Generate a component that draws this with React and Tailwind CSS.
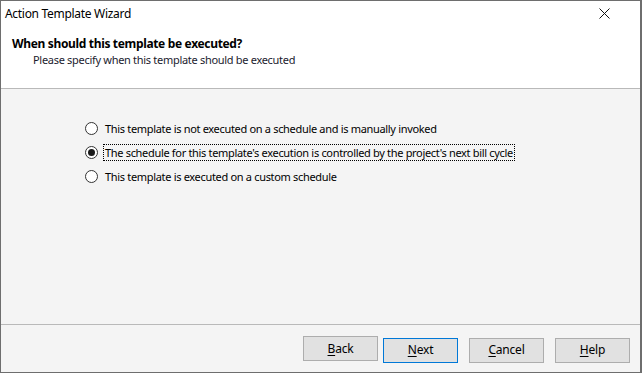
const options = [
  "This template is not executed on a schedule and is manually invoked",
  "The schedule for this template's execution is controlled by the project's next bill cycle",
  "This template is executed on a custom schedule",
];

const Radio = ({ checked }) => (
  <span className="w-[13px] h-[13px] rounded-full border border-[#333333] bg-white flex items-center justify-center shrink-0">
    {checked && <span className="w-[7px] h-[7px] rounded-full bg-[#1a1a1a]" />}
  </span>
);

const Button = ({ label, accel, rest, focused }) => (
  <button
    className={`w-[75px] h-[25px] border bg-[#e1e1e1] text-[12px] text-black tracking-[-0.2px] ${
      focused ? "border-[#0078d7]" : "border-[#adadad]"
    }`}
    aria-label={label}
  >
    <span className="underline underline-offset-2">{accel}</span>
    {rest}
  </button>
);

export default function App() {
  const selected = 1;

  return (
    <div
      className="w-[642px] h-[373px] bg-[#6e6e6e] p-px"
      style={{ fontFamily: '"Noto Sans", "Liberation Sans", sans-serif' }}
    >
      <div className="w-[639px] h-full flex flex-col bg-[#f4f4f4]">
        {/* title bar */}
        <div className="h-[29px] bg-white flex items-center justify-between pl-[4px] pr-[30px] pb-[4px]">
          <span className="text-[12px] text-black tracking-[-0.3px]">Action Template Wizard</span>
          <svg width="11" height="11" viewBox="0 0 11 11">
            <path d="M0.5 0.5 L10.5 10.5 M10.5 0.5 L0.5 10.5" stroke="#111" strokeWidth="1" />
          </svg>
        </div>

        {/* header */}
        <div className="h-[59px] bg-white border-b border-[#b9b9b9] pl-[11px] pt-[6px]">
          <div className="text-[12px] font-bold text-black leading-[16px] tracking-[-0.34px]">
            When should this template be executed?
          </div>
          <div className="text-[11px] text-[#1b1b2e] leading-[16px] pl-[21px] tracking-[-0.3px]">
            Please specify when this template should be executed
          </div>
        </div>

        {/* options */}
        <div className="flex-1 flex flex-col gap-[8px] pl-[84px] pt-[31px]">
          {options.map((opt, i) => (
            <label key={i} className="flex items-center gap-[6px] h-[16px]">
              <Radio checked={i === selected} />
              <span
                className={`text-[11px] text-black leading-[15px] px-[1px] tracking-[-0.32px] ${
                  i === selected ? "outline outline-1 outline-dotted outline-black" : ""
                }`}
              >
                {opt}
              </span>
            </label>
          ))}
        </div>

        {/* footer */}
        <div className="h-[48px] border-t border-[#b9b9b9] flex items-start justify-end pt-[11px] pr-[10px]">
          <div className="flex">
            <Button label="Back" accel="B" rest="ack" />
            <div className="ml-[5px]">
              <Button label="Next" accel="N" rest="ext" focused />
            </div>
            <div className="ml-[11px]">
              <Button label="Cancel" accel="C" rest="ancel" />
            </div>
            <div className="ml-[11px]">
              <Button label="Help" accel="H" rest="elp" />
            </div>
          </div>
        </div>
      </div>
    </div>
  );
}
